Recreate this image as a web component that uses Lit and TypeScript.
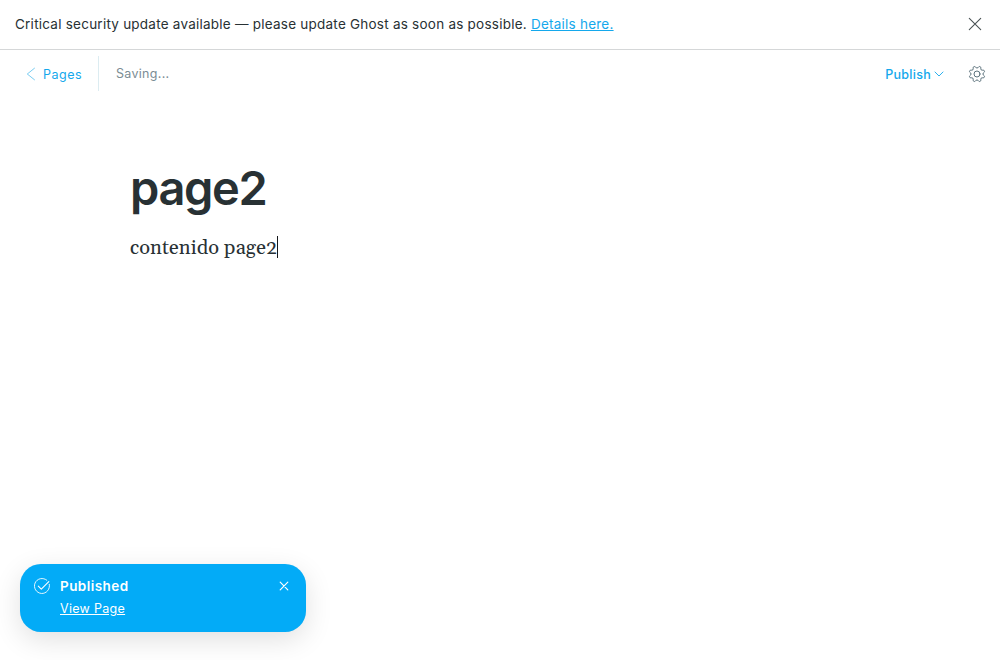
import { LitElement, html, css } from "lit";
import { customElement } from "lit/decorators.js";

@customElement("app-root")
export class AppRoot extends LitElement {
  static styles = css`
    :host {
      display: flex;
      flex-direction: column;
      position: relative;
      height: 660px;
      overflow: hidden;
      background: #fff;
      color: #15171a;
      font-family: Inter, sans-serif;
      -webkit-font-smoothing: antialiased;
    }
    svg { display: block; fill: none; stroke: currentColor; stroke-linecap: round; stroke-linejoin: round; }
    a { color: inherit; text-decoration: underline; }
    .banner {
      display: flex;
      align-items: center;
      justify-content: space-between;
      box-sizing: border-box;
      height: 50px;
      padding: 0 18px 1px 15px;
      border-bottom: 1px solid #d5d7d8;
      color: #283134;
      font-size: 13.5px;
      line-height: 20px;
      letter-spacing: 0.235px;
    }
    .banner svg { color: #4a5254; }
    .banner a { color: #14a8ec; }
    .toolbar { display: flex; align-items: center; height: 47px; padding-right: 15px; font-size: 12.5px; letter-spacing: 0.4px; }
    .back { display: flex; align-items: center; gap: 7px; box-sizing: border-box; width: 99px; height: 35px; padding: 1px 0 0 26px; border-right: 1px solid #dcecf1; color: #14a8ec; letter-spacing: 0.5px; }
    .back svg { color: #55bfee; }
    .status { padding: 0 0 1px 17px; color: #7b8c94; letter-spacing: 0.3px; }
    .publish { display: flex; align-items: center; gap: 3px; margin-left: auto; padding-top: 1px; color: #14a8ec; font-weight: 500; letter-spacing: 0.28px; }
    .gear { margin-left: 25px; margin-top: 1px; color: #5d737d; }
    .editor { padding: 61px 130px 0; color: #283134; }
    h1 { margin: 0; font-size: 47px; line-height: 60px; font-weight: 600; letter-spacing: -1.35px; }
    .body { display: flex; align-items: center; margin-top: 15px; font: 20px/28px Georgia, Gelasio, "Liberation Serif", serif; letter-spacing: 0.11px; }
    .body span:first-child { padding-top: 1px; }
    .caret { width: 1px; height: 22px; margin-bottom: 1px; background: #15171a; }
    .toast {
      position: absolute;
      left: 20px;
      bottom: 28px;
      display: flex;
      align-items: flex-start;
      box-sizing: border-box;
      width: 286px;
      height: 68px;
      padding: 12px 17px 0 14px;
      border-radius: 21px;
      background: #03abf7;
      color: #fff;
      box-shadow: 0 0 1px rgba(0, 0, 0, 0.05), 0 8px 28px rgba(0, 0, 0, 0.12);
    }
    .check { margin: 2px 10px 0 0; }
    .message { flex: 1; font-size: 12.5px; line-height: 20px; letter-spacing: 0.3px; }
    .title { font-size: 13.5px; font-weight: 600; margin-bottom: 3px; letter-spacing: 0.45px; }
    .dismiss { margin-top: 5px; }
  `;

  render() {
    return html`
      <header class="banner">
        <span>Critical security update available — please update Ghost as soon as possible. <a>Details here.</a></span>
        <svg width="14" height="14" viewBox="0 0 14 14"><path d="M1.3 1.3 12.7 12.7M12.7 1.3 1.3 12.7" stroke-width="1.1" /></svg>
      </header>
      <nav class="toolbar">
        <div class="back">
          <svg width="10" height="14" viewBox="0 0 10 14"><path d="M8.5 1.2 1.3 7l7.2 5.8" stroke-width=".8" /></svg>
          <span>Pages</span>
        </div>
        <span class="status">Saving...</span>
        <div class="publish">
          <span>Publish</span>
          <svg width="10" height="6" viewBox="0 0 10 6"><path d="m1 1 4 4 4-4" stroke-width=".9" /></svg>
        </div>
        <svg class="gear" width="16" height="16" viewBox="0 0 24 24" overflow="visible" stroke-width="1.5">
          <path d="M10.546 2.438a1.957 1.957 0 0 0 2.908 0L14.4 1.4a1.959 1.959 0 0 1 3.41 1.413l-.071 1.4a1.958 1.958 0 0 0 2.051 2.054l1.4-.071a1.959 1.959 0 0 1 1.41 3.41l-1.042.94a1.96 1.96 0 0 0 0 2.909l1.042.94a1.959 1.959 0 0 1-1.413 3.41l-1.4-.071a1.958 1.958 0 0 0-2.056 2.056l.071 1.4A1.959 1.959 0 0 1 14.4 22.6l-.941-1.041a1.959 1.959 0 0 0-2.908 0L9.606 22.6A1.959 1.959 0 0 1 6.2 21.192l.072-1.4a1.958 1.958 0 0 0-2.056-2.056l-1.4.071A1.958 1.958 0 0 1 1.4 14.4l1.041-.94a1.96 1.96 0 0 0 0-2.909L1.4 9.606A1.958 1.958 0 0 1 2.809 6.2l1.4.071a1.958 1.958 0 0 0 2.058-2.06L6.2 2.81A1.959 1.959 0 0 1 9.606 1.4z" />
          <circle cx="12" cy="12" r="4.5" />
        </svg>
      </nav>
      <main class="editor">
        <h1>page2</h1>
        <div class="body"><span>contenido page2</span><span class="caret"></span></div>
      </main>
      <aside class="toast">
        <svg class="check" width="16" height="16" viewBox="0 0 16 16">
          <path d="M12.8 2.2A7.5 7.5 0 1 0 15.3 6.3" stroke-width=".9" />
          <path d="m4.3 8.2 3 2.9 7.5-7.4" stroke-width="1.1" />
        </svg>
        <div class="message">
          <div class="title">Published</div>
          <a>View Page</a>
        </div>
        <svg class="dismiss" width="10" height="10" viewBox="0 0 10 10"><path d="m1.2 1.2 7.6 7.6m0-7.6L1.2 8.8" stroke-width="1.2" /></svg>
      </aside>
    `;
  }
}
